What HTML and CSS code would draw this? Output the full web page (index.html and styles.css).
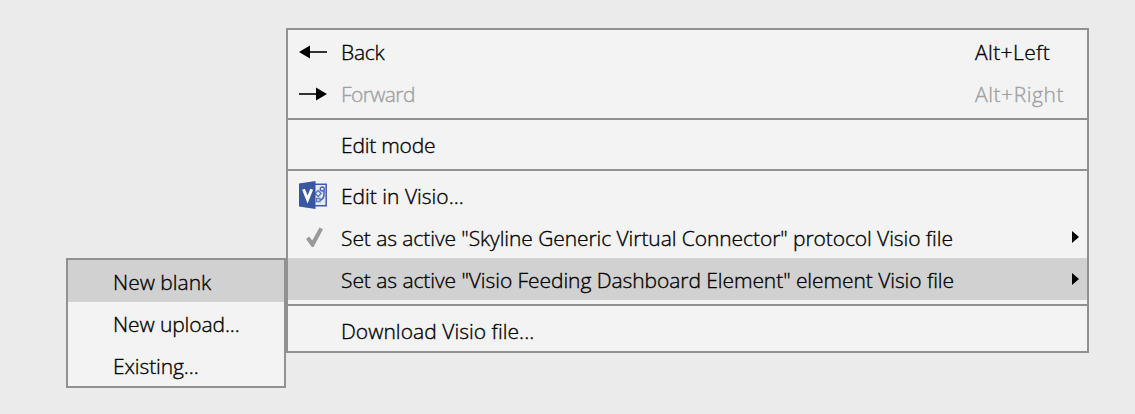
FILE: index.html
```
<!DOCTYPE html>
<html lang="en">
<head>
<meta charset="utf-8">
<title>Context menu</title>
<link rel="stylesheet" href="styles.css">
</head>
<body>
<main class="stage">
  <div class="menu submenu">
    <div class="item active"><span class="label">New blank</span></div>
    <div class="item"><span class="label t-upload">New upload...</span></div>
    <div class="item"><span class="label t-upload">Existing...</span></div>
  </div>
  <div class="menu context">
    <div class="item">
      <svg class="icon" viewBox="0 0 28 28"><path d="M9 15H28" stroke="#333" stroke-width="2"/><path d="M0 15L11 8.5V21.5Z"/></svg>
      <span class="label t-back">Back</span><span class="shortcut t-left">Alt+Left</span>
    </div>
    <div class="item disabled">
      <svg class="icon" viewBox="0 0 28 28"><path d="M0 15H19" stroke="#333" stroke-width="2"/><path d="M28 15L17 8.5V21.5Z"/></svg>
      <span class="label t-forward">Forward</span><span class="shortcut t-right">Alt+Right</span>
    </div>
    <hr class="separator">
    <div class="item"><span class="icon"></span><span class="label t-back">Edit mode</span></div>
    <hr class="separator">
    <div class="item">
      <svg class="icon" viewBox="0 0 28 28">
        <path d="M15 3.3H27.2V24.7H15Z" fill="#e6eaf5" stroke="#3f5bab" stroke-width="1.5"/>
        <path d="M16 12.5L19.3 9.5L22 12.5L19.3 15.5Z" fill="#e6eaf5" stroke="#6279bb" stroke-width="1.5"/>
        <circle cx="23.3" cy="8" r="2" fill="#e6eaf5" stroke="#4a64b0" stroke-width="1.4"/>
        <path d="M25 9.5V13.5Q25 18 20.5 19.5" fill="none" stroke="#4a64b0" stroke-width="1.6"/>
        <path d="M17.5 17.5H21V20.5H17.5Z" fill="#e6eaf5" stroke="#6279bb" stroke-width="1.3"/>
        <path d="M0 2.5L16.5 0V28L0 25.5Z" fill="#3955a3"/>
        <path d="M4.5 8.3L8.6 18.5L12.7 8.3" fill="none" stroke="#fff" stroke-width="3"/>
      </svg>
      <span class="label">Edit in Visio...</span>
    </div>
    <div class="item">
      <svg class="icon" viewBox="0 0 28 28"><path d="M7 16L10 13.5L13.3 17.5L20.5 4.5L24 6.2L14.5 24H12.8Z" fill="#999"/></svg>
      <span class="label t-protocol">Set as active "Skyline Generic Virtual Connector" protocol Visio file</span>
      <svg class="chevron" viewBox="0 0 7 12"><path d="M0 0L7 6L0 12Z"/></svg>
    </div>
    <div class="item active">
      <span class="icon"></span>
      <span class="label t-element">Set as active "Visio Feeding Dashboard Element" element Visio file</span>
      <svg class="chevron" viewBox="0 0 7 12"><path d="M0 0L7 6L0 12Z"/></svg>
    </div>
    <hr class="separator">
    <div class="item"><span class="icon"></span><span class="label t-download">Download Visio file...</span></div>
  </div>
</main>
</body>
</html>
```
FILE: styles.css
```
* { box-sizing: border-box; }
body { margin: 0; background: #ebebeb; font-family: "Open Sans", "Noto Sans", sans-serif; font-size: 21px; font-weight: 300; color: #000; }
.stage { display: flex; align-items: flex-start; height: 414px; padding-left: 66px; overflow: hidden; }
.menu { flex: none; background: #f3f3f3; border: 2px solid #919191; }
.submenu { width: 220px; margin-top: 258px; }
.context { width: 803px; margin-top: 28px; }
.item { display: flex; align-items: center; height: 42px; line-height: 42px; white-space: nowrap; }
.submenu .item { padding-left: 45px; }
.context .item { padding-left: 11px; }
.active { background: #d1d1d1; }
.icon { flex: none; width: 28px; height: 28px; margin-right: 14px; }
.label { flex: 1; }
.label, .shortcut { padding-top: 2px; -webkit-text-stroke: 0.35px currentColor; }
.shortcut { width: 112px; }
.disabled { color: #a0a0a0; }
.chevron { width: 7px; height: 12px; margin: 0 8px 0 0; }
.separator { height: 2px; margin: 4px 0 3px; border: 0; background: #919191; }
.t-upload { letter-spacing: -0.1px; }
.t-back { letter-spacing: -0.22px; }
.t-forward { letter-spacing: -0.6px; }
.t-left { letter-spacing: 0.4px; }
.t-right { letter-spacing: 0.58px; }
.t-protocol { letter-spacing: -0.075px; }
.t-element { letter-spacing: -0.065px; }
.t-download { letter-spacing: 0.04px; }
```
